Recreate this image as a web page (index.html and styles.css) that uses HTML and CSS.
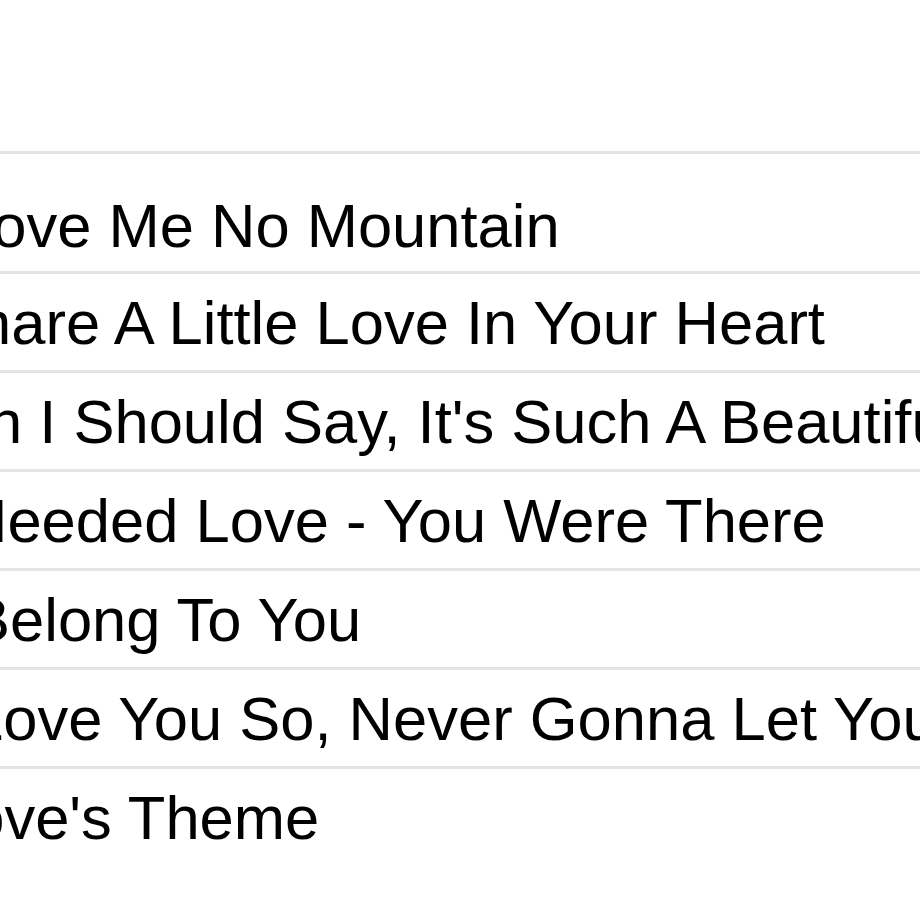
FILE: index.html
```html
<!DOCTYPE html>
<html lang="en">
<head>
    <meta charset="UTF-8">
    <meta name="viewport" content="width=device-width, initial-scale=1.0">
    <title>Playlist</title>
    <link rel="stylesheet" href="styles.css">
</head>
<body>
    <div class="playlist">
        <ul class="tracks">
            <li class="track">Love Me No Mountain</li>
            <li class="track track-share">Share A Little Love In Your Heart</li>
            <li class="track track-then">Then I Should Say, It's Such A Beautiful Morning</li>
            <li class="track track-needed">Needed Love - You Were There</li>
            <li class="track track-shift">Belong To You</li>
            <li class="track track-shift">Love You So, Never Gonna Let You Go</li>
            <li class="track track-theme">Love's Theme</li>
        </ul>
    </div>
</body>
</html>
```

FILE: styles.css
```css
body {
    margin: 0;
    background-color: #fff;
    color: #000;
    font-family: "Liberation Sans", Arial, sans-serif;
    overflow: hidden;
}

.playlist {
    width: 920px;
    height: 920px;
    overflow: hidden;
    padding-top: 151px;
    box-sizing: border-box;
}

.tracks {
    list-style: none;
    margin: 0 0 0 -42px;
    padding: 0;
    border-top: 3px solid #e4e4e4;
}

.track {
    display: flex;
    align-items: center;
    height: 96px;
    font-size: 61.5px;
    white-space: nowrap;
    border-bottom: 3px solid #e4e4e4;
}

.track:first-child {
    padding-top: 25px;
    height: 92px;
}

.track:last-child {
    border-bottom: none;
}

/* the list is scrolled sideways, titles start at slightly different spots */
.track-share {
    text-indent: -22px;
}

.track-then {
    text-indent: -76px;
}

.track-needed {
    text-indent: 5px;
}

.track-shift {
    text-indent: 11px;
}

.track-theme {
    text-indent: -22px;
}
```
